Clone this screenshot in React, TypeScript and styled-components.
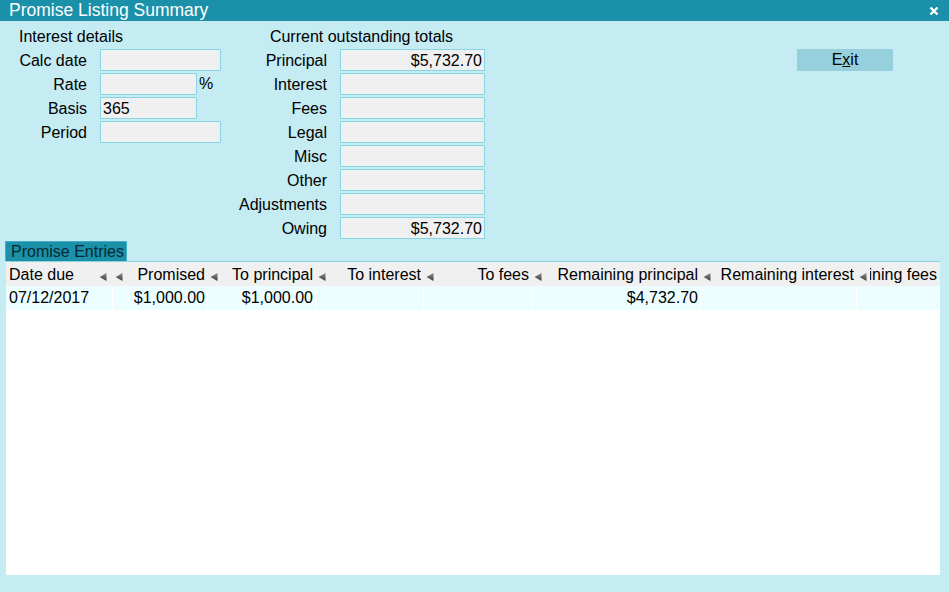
import React from "react";
import styled, { createGlobalStyle } from "styled-components";

const Global = createGlobalStyle`
  html, body { margin: 0; padding: 0; }
  body {
    background: #c5ebf3;
    font-family: "Liberation Sans", Arial, sans-serif;
    font-size: 16px;
    color: #000;
  }
`;

const Window = styled.div`
  width: 949px;
  height: 592px;
  display: flex;
  flex-direction: column;
  background: #c5ebf3;
  overflow: hidden;
`;

const TitleBar = styled.div`
  height: 21px;
  flex: none;
  background: #1b91a9;
  color: #fff;
  display: flex;
  align-items: center;
  justify-content: space-between;
  padding: 0 10px 0 9px;
  font-size: 17.5px;
  line-height: 21px;
`;

const CloseBox = styled.div`
  width: 10px;
  height: 10px;
  display: flex;
`;

const Top = styled.div`
  display: flex;
  align-items: flex-start;
  padding-top: 6px;
  height: 214px;
  flex: none;
`;

const Group = styled.div<{ $left: number; $label: number; $field: number }>`
  margin-left: ${(p) => p.$left}px;
  display: grid;
  grid-template-columns: ${(p) => p.$label}px ${(p) => p.$field}px;
  grid-template-rows: 20px;
  grid-auto-rows: 22px;
  column-gap: 13px;
  row-gap: 2px;
`;

const Heading = styled.div<{ $center?: boolean }>`
  grid-column: 1 / -1;
  line-height: 19px;
  text-align: ${(p) => (p.$center ? "center" : "left")};
  white-space: nowrap;
`;

const Label = styled.div`
  text-align: right;
  line-height: 23px;
  white-space: nowrap;
`;

const FieldCell = styled.div`
  display: flex;
  align-items: center;
`;

const Field = styled.div<{ $w?: number; $right?: boolean }>`
  box-sizing: border-box;
  width: ${(p) => (p.$w ? `${p.$w}px` : "100%")};
  height: 22px;
  background: #f0f0f0;
  border: 1px solid #88d4e4;
  line-height: 21px;
  padding: 0 2px;
  text-align: ${(p) => (p.$right ? "right" : "left")};
  white-space: nowrap;
`;

const Unit = styled.span`
  margin-left: 2px;
  line-height: 22px;
`;

const ExitButton = styled.button`
  margin-left: auto;
  margin-right: 56px;
  margin-top: 22px;
  width: 96px;
  height: 22px;
  background: #96d0dc;
  border: none;
  padding: 0;
  font-family: inherit;
  font-size: 16px;
  color: #000;
  line-height: 22px;
  u { text-decoration: underline; }
`;

const TabRow = styled.div`
  height: 20px;
  flex: none;
  display: flex;
  padding-left: 5px;
`;

const Tab = styled.div`
  box-sizing: border-box;
  width: 122px;
  height: 20px;
  background: #1b91a9;
  border: 1px solid #46aec2;
  border-bottom: none;
  color: #072830;
  line-height: 19px;
  padding-left: 5px;
  white-space: nowrap;
`;

const Grid = styled.div`
  margin: 0 9px 0 6px;
  height: 313px;
  flex: none;
  background: #fff;
  border-top: 1px solid #8ed2e0;
  display: flex;
  flex-direction: column;
`;

const COLS = "107px 95px 108px 108px 108px 169px 156px 83px";

const HeaderRow = styled.div`
  height: 24px;
  display: grid;
  grid-template-columns: ${COLS};
  background: #f0f0f0;
`;

const HeadCell = styled.div<{ $pl: number }>`
  position: relative;
  display: flex;
  align-items: center;
  padding: 0 3px 0 ${(p) => p.$pl}px;
`;

const HeadText = styled.div<{ $left?: boolean }>`
  flex: 1;
  min-width: 0;
  overflow: hidden;
  display: flex;
  justify-content: ${(p) => (p.$left ? "flex-start" : "flex-end")};
  span { flex: none; white-space: nowrap; line-height: 25px; }
`;

const SortArrow = styled.svg<{ $inside?: boolean }>`
  position: absolute;
  top: 10px;
  width: 8px;
  height: 9px;
  ${(p) => (p.$inside ? "right: 6px;" : "left: calc(100% + 2px);")}
  z-index: 1;
`;

const DataRow = styled.div`
  height: 24px;
  display: grid;
  grid-template-columns: ${COLS};
  background: #ecfeff;
`;

const DataCell = styled.div<{ $right?: boolean }>`
  box-sizing: border-box;
  border-right: 1px solid #ffffff;
  line-height: 24px;
  padding: 0 2px 0 3px;
  text-align: ${(p) => (p.$right ? "right" : "left")};
  white-space: nowrap;
  overflow: hidden;
`;

const Arrow = ({ inside }: { inside?: boolean }) => (
  <SortArrow $inside={inside} viewBox="0 0 8 9">
    <defs>
      <linearGradient id="ag" x1="0" y1="0" x2="0" y2="1">
        <stop offset="0" stopColor="#909090" />
        <stop offset="1" stopColor="#383838" />
      </linearGradient>
    </defs>
    <polygon points="0.5,5 7.5,1 7.5,9" fill="url(#ag)" />
  </SortArrow>
);

const leftRows = [
  { label: "Calc date", value: "", w: undefined as number | undefined },
  { label: "Rate", value: "", w: 97, unit: "%" },
  { label: "Basis", value: "365", w: 97 },
  { label: "Period", value: "", w: undefined },
];

const rightRows = [
  { label: "Principal", value: "$5,732.70" },
  { label: "Interest", value: "" },
  { label: "Fees", value: "" },
  { label: "Legal", value: "" },
  { label: "Misc", value: "" },
  { label: "Other", value: "" },
  { label: "Adjustments", value: "" },
  { label: "Owing", value: "$5,732.70" },
];

const headers = [
  "Date due",
  "Promised",
  "To principal",
  "To interest",
  "To fees",
  "Remaining principal",
  "Remaining interest",
  "Remaining fees",
];

const row = [
  { v: "07/12/2017", r: false },
  { v: "$1,000.00", r: true },
  { v: "$1,000.00", r: true },
  { v: "", r: true },
  { v: "", r: true },
  { v: "$4,732.70", r: true },
  { v: "", r: true },
  { v: "", r: true },
];

export default function App() {
  return (
    <Window>
      <Global />
      <TitleBar>
        <span>Promise Listing Summary</span>
        <CloseBox>
          <svg width="10" height="10" viewBox="0 0 10 10">
            <path d="M1.5 1.5 L8.5 8.5 M8.5 1.5 L1.5 8.5" stroke="#fff" strokeWidth="2.4" />
          </svg>
        </CloseBox>
      </TitleBar>
      <Top>
        <Group $left={19} $label={68} $field={121}>
          <Heading>Interest details</Heading>
          {leftRows.map((r) => (
            <React.Fragment key={r.label}>
              <Label>{r.label}</Label>
              <FieldCell>
                <Field $w={r.w}>{r.value}</Field>
                {r.unit && <Unit>{r.unit}</Unit>}
              </FieldCell>
            </React.Fragment>
          ))}
        </Group>
        <Group $left={17} $label={89} $field={145}>
          <Heading $center>Current outstanding totals</Heading>
          {rightRows.map((r) => (
            <React.Fragment key={r.label}>
              <Label>{r.label}</Label>
              <Field $right>{r.value}</Field>
            </React.Fragment>
          ))}
        </Group>
        <ExitButton>
          E<u>x</u>it
        </ExitButton>
      </Top>
      <TabRow>
        <Tab>Promise Entries</Tab>
      </TabRow>
      <Grid>
        <HeaderRow>
          {headers.map((h, i) => (
            <HeadCell key={h} $pl={i === 0 ? 3 : i === headers.length - 1 ? 13 : 10}>
              <HeadText $left={i === 0}>
                <span>{h}</span>
              </HeadText>
              {i === 0 && <Arrow inside />}
              {i < headers.length - 1 && <Arrow />}
            </HeadCell>
          ))}
        </HeaderRow>
        <DataRow>
          {row.map((c, i) => (
            <DataCell key={i} $right={c.r}>
              {c.v}
            </DataCell>
          ))}
        </DataRow>
      </Grid>
    </Window>
  );
}
